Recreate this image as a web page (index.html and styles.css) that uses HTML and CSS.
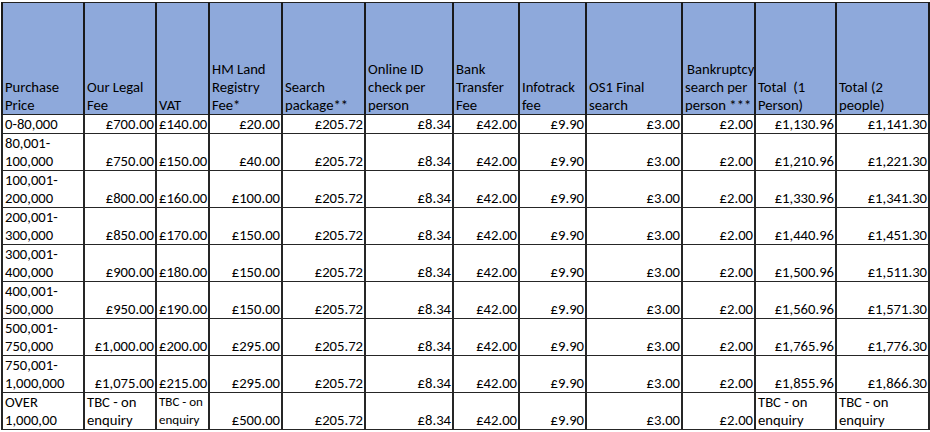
FILE: index.html
```html
<!DOCTYPE html>
<html lang="en">
<head>
<meta charset="utf-8">
<title>Conveyancing fees</title>
<link rel="stylesheet" href="styles.css">
</head>
<body>
<table class="fees">
  <colgroup>
    <col class="c1"><col class="c2"><col class="c3"><col class="c4"><col class="c5"><col class="c6">
    <col class="c7"><col class="c8"><col class="c9"><col class="c10"><col class="c11"><col class="c12">
  </colgroup>
  <thead>
    <tr class="head">
      <th>Purchase<br>Price</th>
      <th>Our Legal<br>Fee</th>
      <th>VAT</th>
      <th>HM Land<br>Registry<br>Fee*</th>
      <th>Search<br>package**</th>
      <th>Online ID<br>check per<br>person</th>
      <th>Bank<br>Transfer<br>Fee</th>
      <th>Infotrack<br>fee</th>
      <th>OS1 Final<br>search</th>
      <th><span class="indent">Bankruptcy</span><br>search per<br>person ***</th>
      <th><span class="pre">Total  (1</span><br>Person)</th>
      <th>Total (2<br>people)</th>
    </tr>
  </thead>
  <tbody>
    <tr class="single">
      <td>0-80,000</td><td class="n">£700.00</td><td class="n">£140.00</td><td class="n">£20.00</td><td class="n">£205.72</td><td class="n">£8.34</td><td class="n">£42.00</td><td class="n">£9.90</td><td class="n">£3.00</td><td class="n">£2.00</td><td class="n">£1,130.96</td><td class="n">£1,141.30</td>
    </tr>
    <tr>
      <td>80,001-<br>100,000</td><td class="n">£750.00</td><td class="n">£150.00</td><td class="n">£40.00</td><td class="n">£205.72</td><td class="n">£8.34</td><td class="n">£42.00</td><td class="n">£9.90</td><td class="n">£3.00</td><td class="n">£2.00</td><td class="n">£1,210.96</td><td class="n">£1,221.30</td>
    </tr>
    <tr>
      <td>100,001-<br>200,000</td><td class="n">£800.00</td><td class="n">£160.00</td><td class="n">£100.00</td><td class="n">£205.72</td><td class="n">£8.34</td><td class="n">£42.00</td><td class="n">£9.90</td><td class="n">£3.00</td><td class="n">£2.00</td><td class="n">£1,330.96</td><td class="n">£1,341.30</td>
    </tr>
    <tr>
      <td>200,001-<br>300,000</td><td class="n">£850.00</td><td class="n">£170.00</td><td class="n">£150.00</td><td class="n">£205.72</td><td class="n">£8.34</td><td class="n">£42.00</td><td class="n">£9.90</td><td class="n">£3.00</td><td class="n">£2.00</td><td class="n">£1,440.96</td><td class="n">£1,451.30</td>
    </tr>
    <tr>
      <td>300,001-<br>400,000</td><td class="n">£900.00</td><td class="n">£180.00</td><td class="n">£150.00</td><td class="n">£205.72</td><td class="n">£8.34</td><td class="n">£42.00</td><td class="n">£9.90</td><td class="n">£3.00</td><td class="n">£2.00</td><td class="n">£1,500.96</td><td class="n">£1,511.30</td>
    </tr>
    <tr>
      <td>400,001-<br>500,000</td><td class="n">£950.00</td><td class="n">£190.00</td><td class="n">£150.00</td><td class="n">£205.72</td><td class="n">£8.34</td><td class="n">£42.00</td><td class="n">£9.90</td><td class="n">£3.00</td><td class="n">£2.00</td><td class="n">£1,560.96</td><td class="n">£1,571.30</td>
    </tr>
    <tr>
      <td>500,001-<br>750,000</td><td class="n">£1,000.00</td><td class="n">£200.00</td><td class="n">£295.00</td><td class="n">£205.72</td><td class="n">£8.34</td><td class="n">£42.00</td><td class="n">£9.90</td><td class="n">£3.00</td><td class="n">£2.00</td><td class="n">£1,765.96</td><td class="n">£1,776.30</td>
    </tr>
    <tr>
      <td>750,001-<br>1,000,000</td><td class="n">£1,075.00</td><td class="n">£215.00</td><td class="n">£295.00</td><td class="n">£205.72</td><td class="n">£8.34</td><td class="n">£42.00</td><td class="n">£9.90</td><td class="n">£3.00</td><td class="n">£2.00</td><td class="n">£1,855.96</td><td class="n">£1,866.30</td>
    </tr>
    <tr>
      <td>OVER<br>1,000,00</td><td>TBC - on<br>enquiry</td><td class="small">TBC - on<br>enquiry</td><td class="n">£500.00</td><td class="n">£205.72</td><td class="n">£8.34</td><td class="n">£42.00</td><td class="n">£9.90</td><td class="n">£3.00</td><td class="n">£2.00</td><td>TBC - on<br>enquiry</td><td>TBC - on<br>enquiry</td>
    </tr>
  </tbody>
</table>
</body>
</html>
```
FILE: styles.css
```css
html, body {
  margin: 0;
  padding: 0;
  background: #ffffff;
}

body {
  padding: 2px 0 0 1px;
  font-family: "Carlito", "Lato", "Liberation Sans", sans-serif;
  font-size: 14.67px;
  color: #000000;
}

.fees {
  border-collapse: collapse;
  table-layout: fixed;
  width: 927px;
}

.c1 { width: 82px; }
.c2 { width: 72px; }
.c3 { width: 53px; }
.c4 { width: 73px; }
.c5 { width: 83px; }
.c6 { width: 88px; }
.c7 { width: 66px; }
.c8 { width: 67px; }
.c9 { width: 96px; }
.c10 { width: 73px; }
.c11 { width: 81px; }
.c12 { width: 93px; }

.fees th,
.fees td {
  border: 1px solid #222222;
  padding: 0 1px 0 2px;
  line-height: 18px;
  vertical-align: bottom;
  text-align: left;
  font-weight: normal;
  white-space: nowrap;
  overflow: hidden;
}

.fees th {
  background: #8ea9db;
  border-left-width: 2px;
  border-right-width: 2px;
  border-left-color: #1a1a1a;
  border-right-color: #1a1a1a;
}

.head {
  height: 112px;
}

.fees tbody tr {
  height: 37px;
}

.fees tbody tr.single {
  height: 18px;
}

.fees td {
  border-left-width: 2px;
  border-right-width: 2px;
  border-color: #262626;
}

.fees td.n {
  text-align: right;
}

.fees td.small {
  font-size: 13px;
}

.indent {
  padding-left: 2px;
}

.pre {
  white-space: pre;
}
```
